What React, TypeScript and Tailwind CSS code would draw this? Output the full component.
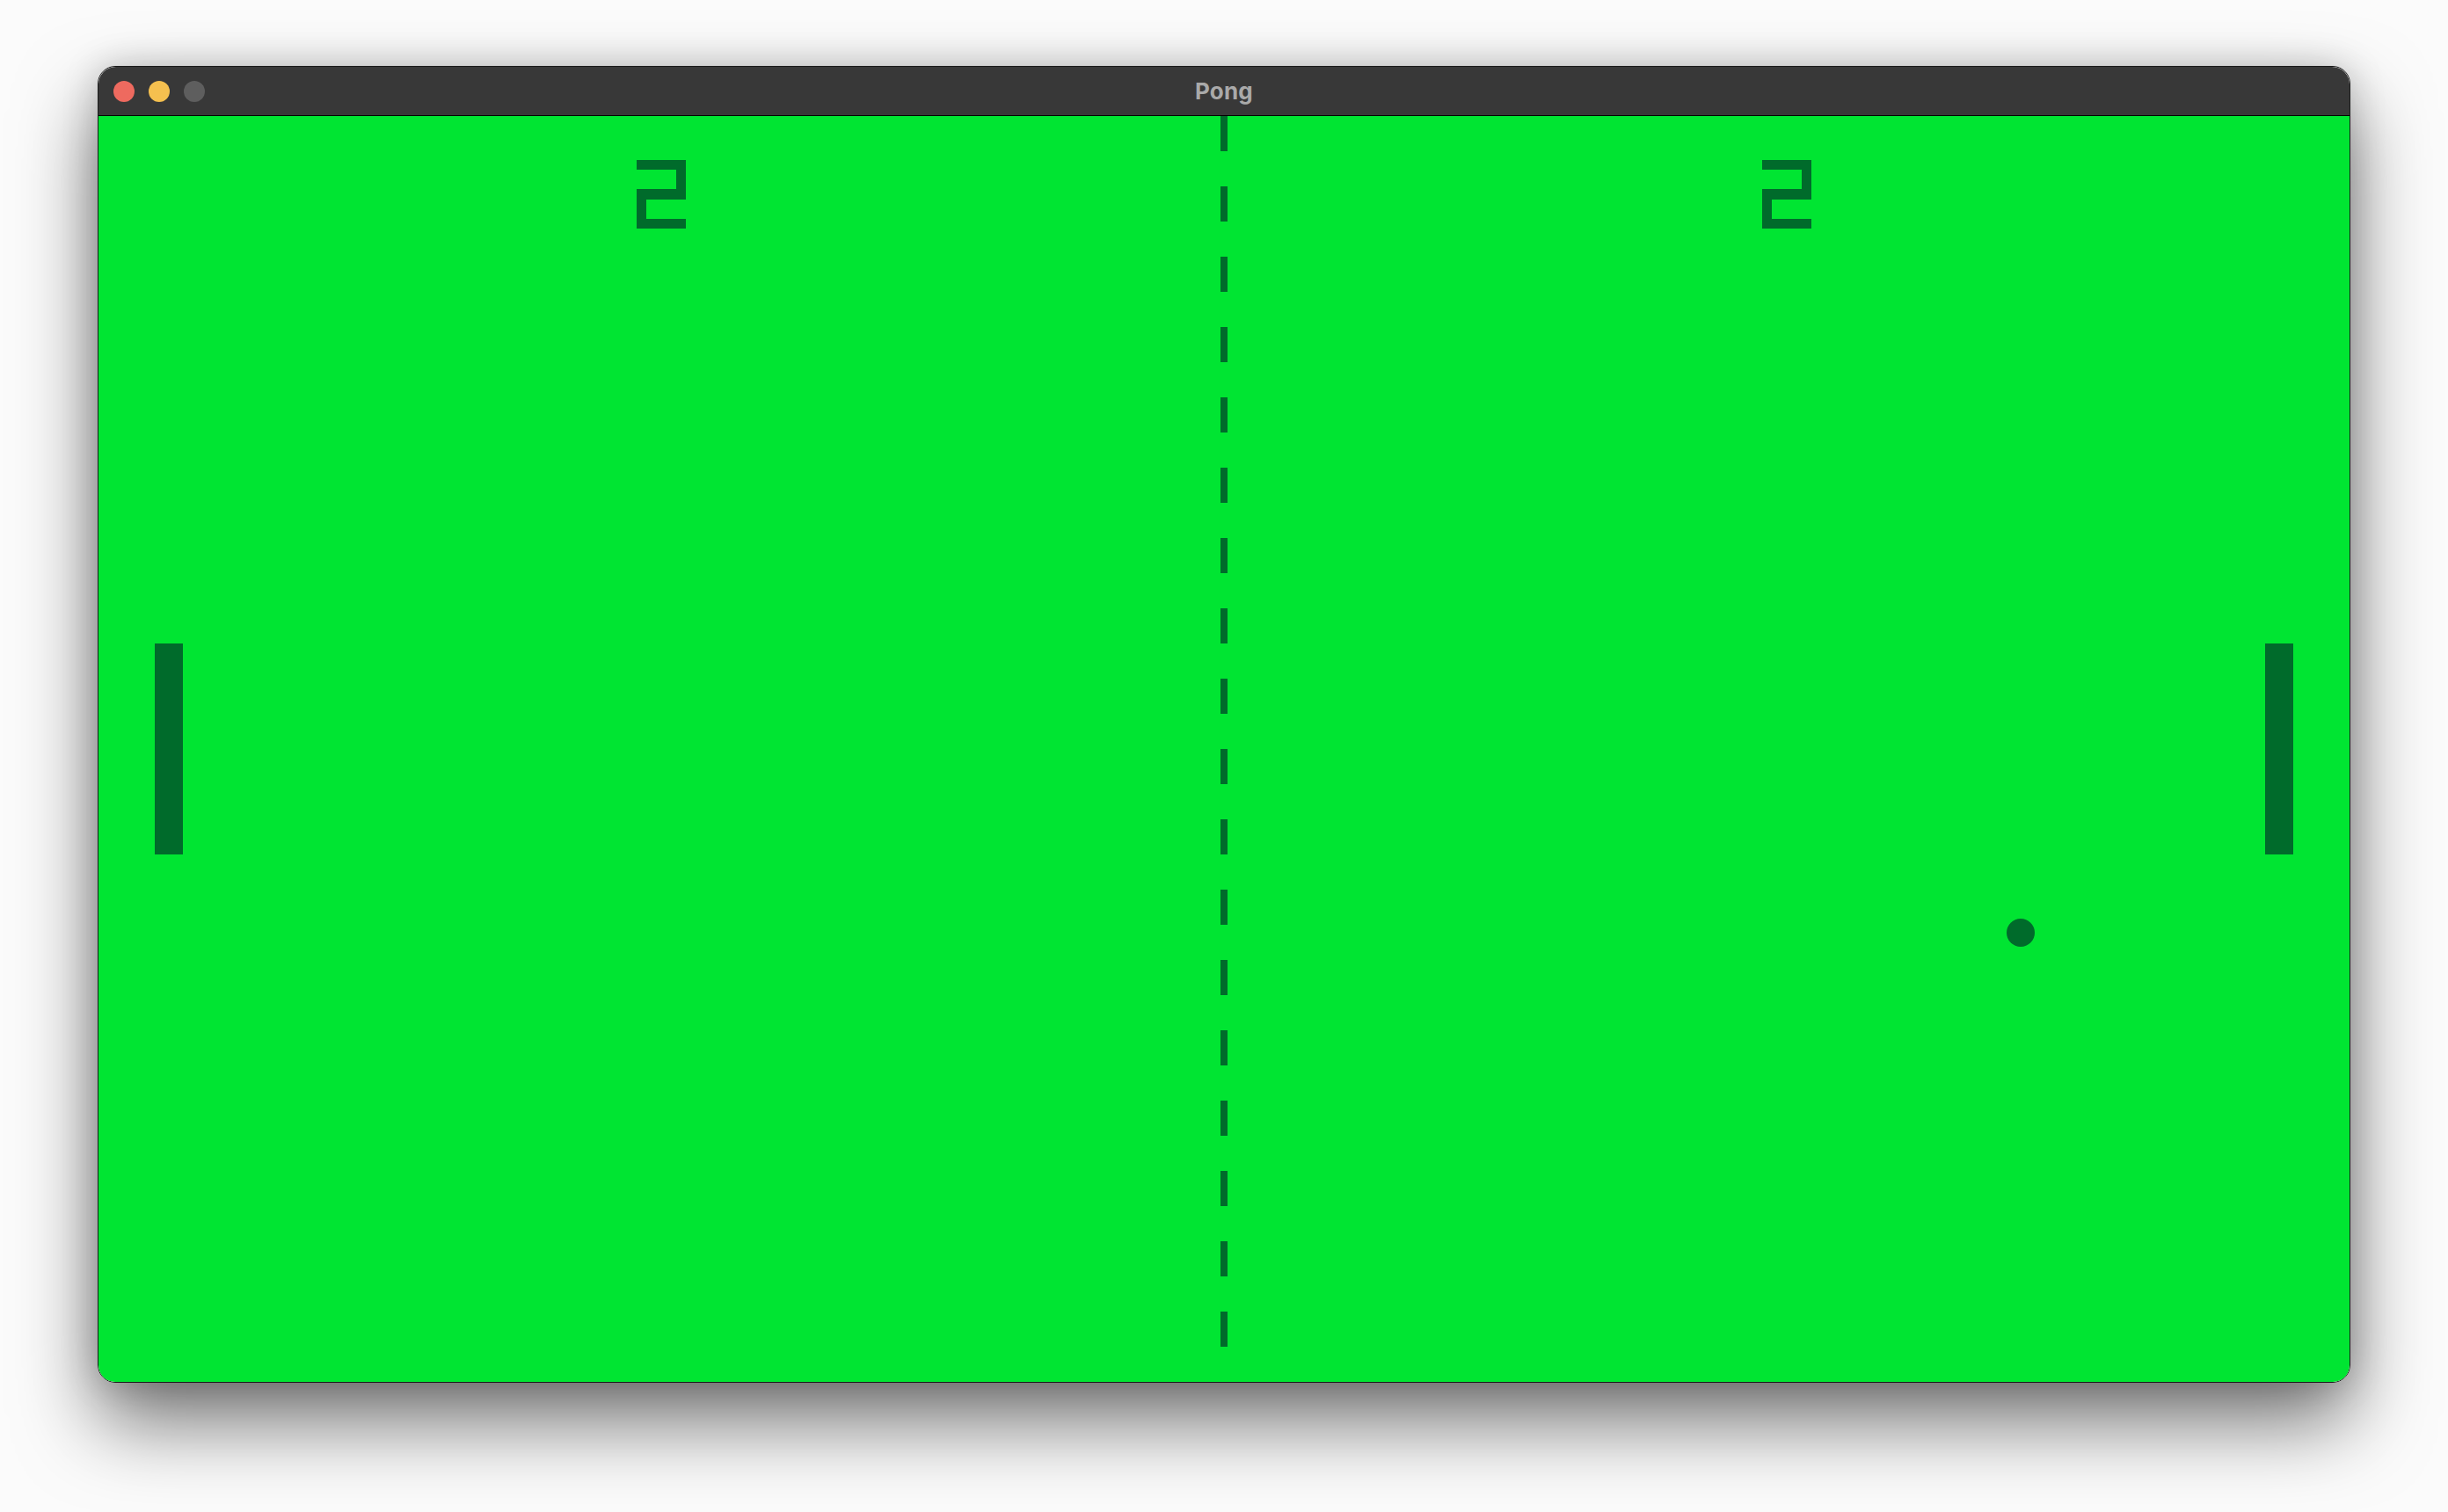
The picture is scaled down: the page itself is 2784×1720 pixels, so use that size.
const INK = "bg-[#006b2b]"

function Digit2() {
  // 5x7 pixel glyph
  return (
    <svg viewBox="0 0 5 7" className="w-[56px] h-[78px]" shapeRendering="crispEdges">
      <g fill="#006b2b">
        <rect x="0" y="0" width="5" height="1" />
        <rect x="4" y="0" width="1" height="4" />
        <rect x="0" y="3" width="5" height="1" />
        <rect x="0" y="3" width="1" height="4" />
        <rect x="0" y="6" width="5" height="1" />
      </g>
    </svg>
  )
}

function TitleBar() {
  return (
    <div className="h-[56px] bg-[#383838] border-b border-black grid grid-cols-[1fr_auto_1fr] items-center rounded-t-[20px]">
      <div className="flex gap-[16px] pl-[17px]">
        <span className="w-[24px] h-[24px] rounded-full bg-[#ee6a5f]" />
        <span className="w-[24px] h-[24px] rounded-full bg-[#f5c04f]" />
        <span className="w-[24px] h-[24px] rounded-full bg-[#5e5e5e]" />
      </div>
      <span className="text-[26px] font-bold text-[#a9a9a9] font-['Inter','Liberation_Sans',sans-serif] tracking-[0.2px]">
        Pong
      </span>
      <div />
    </div>
  )
}

function Court() {
  const dashes = Array.from({ length: 18 })
  return (
    <div className="relative w-[2560px] h-[1440px] bg-[#00e532] rounded-b-[19px] overflow-hidden flex flex-col">
      {/* net */}
      <div className="absolute inset-0 flex justify-center">
        <div className="flex flex-col gap-[40px]">
          {dashes.map((_, i) => (
            <div key={i} className={`w-[8px] h-[40px] ${INK}`} />
          ))}
        </div>
      </div>

      <div className="grid grid-cols-2 justify-items-center pt-[50px]">
        <Digit2 />
        <Digit2 />
      </div>

      <div className="flex flex-1 items-center justify-between px-[64px] pb-[128px]">
        <div className={`w-[32px] h-[240px] ${INK}`} />
        <div className={`w-[32px] h-[240px] ${INK}`} />
      </div>

      {/* ball */}
      <div className={`absolute left-[2170px] top-[913px] w-[32px] h-[32px] rounded-full ${INK}`} />
    </div>
  )
}

export default function App() {
  return (
    <div className="w-[2784px] h-[1720px] bg-[#fbfbfb] pl-[111px] pt-[75px] overflow-hidden">
      <div className="w-[2562px] border border-[#1a1a1a] rounded-[20px] shadow-[0_44px_90px_rgba(0,0,0,0.55),0_0_40px_rgba(0,0,0,0.18)]">
        <TitleBar />
        <Court />
      </div>
    </div>
  )
}
